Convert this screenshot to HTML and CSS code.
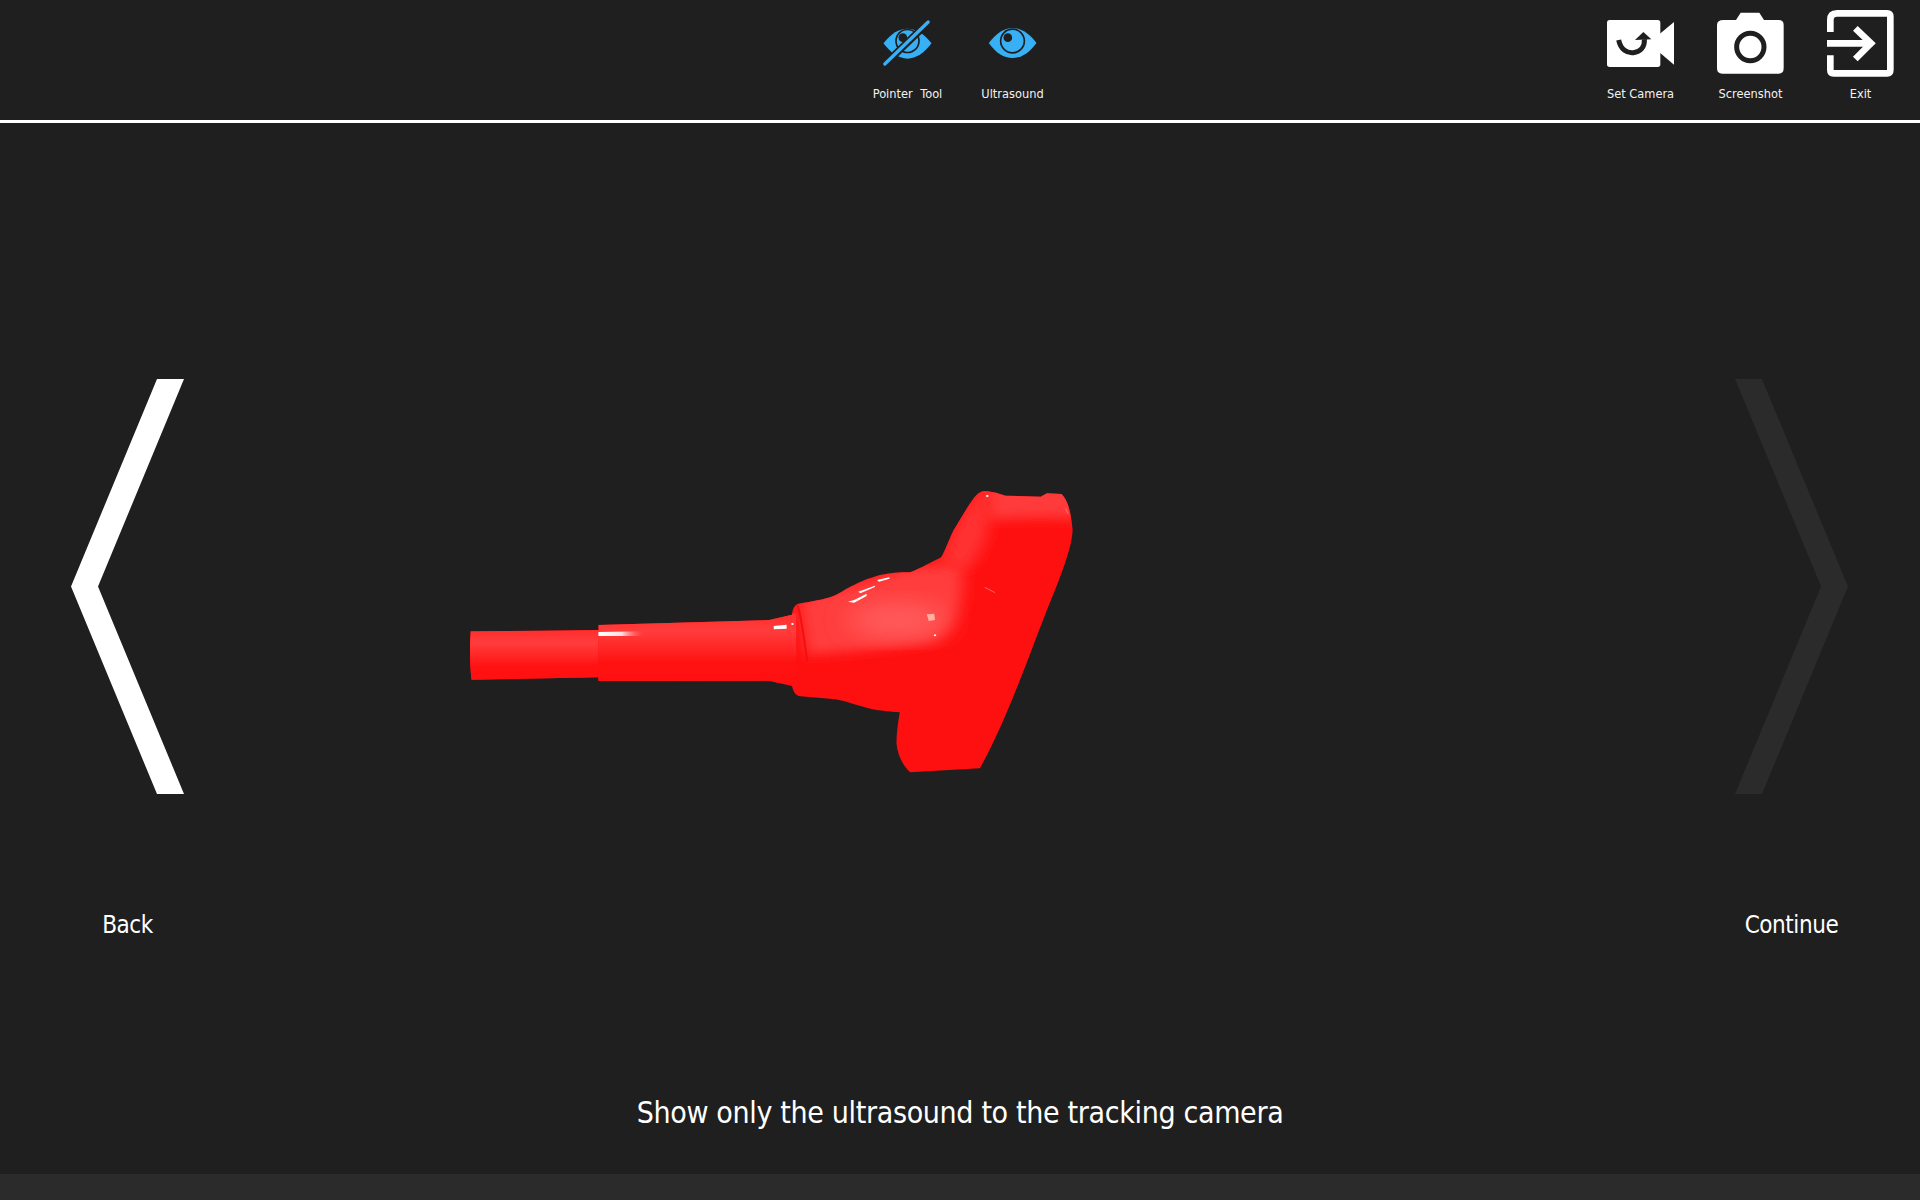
FILE: index.html
```html
<!DOCTYPE html>
<html lang="en">
<head>
<meta charset="utf-8">
<title>Ultrasound tracking</title>
<link rel="stylesheet" href="styles.css">
</head>
<body>
<div class="app">
  <header class="toolbar">
    <div class="tool-spacer"></div>
    <div class="tool-group tool-group-center">
      <div class="tool tool-wide">
        <svg class="tool-icon" viewBox="99.5 30 201 201">
          <path class="blue" d="M128 130C150 100 175 86 200 86s50 14 72 44c-22 30-47 46-72 46s-50-16-72-46z"/>
          <circle class="dark" cx="200" cy="123" r="37"/>
          <circle class="blue" cx="200" cy="123" r="32"/>
          <circle class="dark" cx="186" cy="113" r="13"/>
          <path class="slash-gap" d="M118 206L275 55"/>
          <path class="slash" d="M132 192L262 66"/>
        </svg>
        <span class="tool-label tool-label-spaced">Pointer Tool</span>
      </div>
      <div class="tool tool-wide">
        <svg class="tool-icon" viewBox="415.5 30 201 201">
          <path class="blue" d="M445 129C468 100 490 84 516 84s50 16 72 45c-22 30-46 45-72 45s-50-15-71-45z"/>
          <circle class="dark" cx="516" cy="123" r="38"/>
          <circle class="blue" cx="516" cy="123" r="33"/>
          <circle class="dark" cx="502" cy="113" r="13"/>
        </svg>
        <span class="tool-label">Ultrasound</span>
      </div>
    </div>
    <div class="tool-group tool-group-right">
      <div class="tool">
        <svg class="tool-icon" viewBox="81 30 201 201">
          <rect class="white" x="81" y="60" width="160" height="141" rx="8"/>
          <path class="white" d="M238 103L283 65V195L238 157z"/>
          <path class="arrow" d="M116 120C122 150 142 160 160 158C182 156 195 140 193 118"/>
          <path class="dark" d="M165 120L190 96L214 118z"/>
        </svg>
        <span class="tool-label">Set Camera</span>
      </div>
      <div class="tool">
        <svg class="tool-icon" viewBox="411 30 201 201">
          <path class="white" d="M431 60H468L482 38H538L552 60H596Q611 60 611 75V205Q611 221 596 221H427Q411 221 411 205V75Q411 60 431 60z"/>
          <circle class="ring" cx="511" cy="141" r="41"/>
        </svg>
        <span class="tool-label">Screenshot</span>
      </div>
      <div class="tool">
        <svg class="tool-icon" viewBox="741 30 201 201">
          <path class="exit-box" d="M751 96V60Q751 40 771 40H921Q931 40 931 50V210Q931 220 921 220H761Q751 220 751 210V166"/>
          <path class="exit-arrow" d="M741 130H872"/>
          <path class="exit-arrow" d="M826 85L873 130L826 177"/>
        </svg>
        <span class="tool-label">Exit</span>
      </div>
    </div>
  </header>

  <main class="stage">
    <div class="stage-row">
      <div class="nav nav-back">
        <svg class="chevron" viewBox="0 0 113 415"><polygon class="white" points="86,0 113,0 27,207.5 113,415 86,415 0,207.5"/></svg>
        <span class="nav-label">Back</span>
      </div>
      <div class="model-wrap">
        <svg class="model" viewBox="0 0 1568 960" preserveAspectRatio="none">
          <defs>
            <path id="outline" d="M1290 63C1310 64 1325 72 1340 77L1425 80L1440 70L1475 72C1488 88 1497 115 1502 180C1500 230 1480 300 1440 420C1405 530 1340 760 1278 895L1110 907C1095 890 1080 860 1077 820C1077 790 1081 755 1085 727C1060 725 1035 722 1020 718C985 708 960 695 930 688L845 679C835 678 828 665 825 648L770 632L358 633V622L52 629C48 590 47 530 50 484L358 480V465L770 450L825 434C826 418 830 408 838 402C870 395 905 388 925 378C945 368 955 355 975 345C1000 328 1020 322 1030 318C1050 310 1085 306 1110 307C1135 295 1165 275 1185 262C1195 240 1205 205 1215 180C1235 140 1255 95 1270 75C1277 67 1283 63 1290 63z"/>
            <clipPath id="body-clip"><use href="#outline"/></clipPath>
            <filter id="soft" x="-30%" y="-30%" width="160%" height="160%"><feGaussianBlur stdDeviation="18"/></filter>
            <filter id="softer" x="-30%" y="-30%" width="160%" height="160%"><feGaussianBlur stdDeviation="34"/></filter>
            <linearGradient id="tubeA" x1="0" y1="0" x2="0" y2="1">
              <stop offset="0" stop-color="#ff2e2e"/>
              <stop offset=".25" stop-color="#ff3c3c"/>
              <stop offset=".5" stop-color="#ff2626"/>
              <stop offset=".7" stop-color="#ff1212"/>
              <stop offset="1" stop-color="#ff1010"/>
            </linearGradient>
            <linearGradient id="shine" x1="0" y1="0" x2="1" y2="0">
              <stop offset="0" stop-color="#ffffff"/>
              <stop offset=".5" stop-color="#ffe0e0"/>
              <stop offset="1" stop-color="#ff5050" stop-opacity="0"/>
            </linearGradient>
          </defs>
          <use class="red" href="#outline"/>
          <g clip-path="url(#body-clip)">
            <path class="fill-tube" d="M40 484L358 480V630L40 635z"/>
            <path class="fill-tube" d="M358 450L835 430V640L358 640z"/>
            <path class="fill-neck soft" d="M840 390L1110 290L1230 280C1250 360 1225 470 1170 515C1090 530 950 545 860 555z"/>
            <ellipse class="fill-glow softer" cx="1080" cy="450" rx="120" ry="55"/>
            <path class="fill-head soft" d="M1290 50C1260 70 1220 150 1200 210L1180 280L1250 300C1285 240 1300 190 1300 150z"/>
            <path class="fill-rim soft" d="M1290 40L1520 50V150C1450 140 1360 145 1300 150z"/>
            <path class="ridge" d="M838 405C850 450 855 520 862 575"/>
          </g>
          <path class="shine" d="M358 486L470 484V498L358 498z"/>
          <path class="spark" d="M781 468L812 464V476L781 478z"/>
          <path class="spark" d="M960 395L975 390L1005 371V378L975 398z"/>
          <path class="spark" d="M985 365L1025 347V351L990 370z"/>
          <path class="spark" d="M1030 330L1060 322V326L1035 335z"/>
          <path class="spark-soft" d="M1150 433L1168 431L1170 450L1155 453z"/>
          <path class="spark-thin" d="M1290 352L1315 368"/>
          <path class="spark-thin" d="M1485 115L1491 132"/>
          <circle class="spark" cx="1170" cy="496" r="3"/>
          <circle class="spark" cx="1296" cy="78" r="3"/>
          <circle class="spark" cx="826" cy="462" r="3"/>
        </svg>
      </div>
      <div class="nav nav-continue">
        <svg class="chevron" viewBox="0 0 113 415"><polygon class="disabled" points="0,0 27,0 113,207.5 27,415 0,415 86,207.5"/></svg>
        <span class="nav-label">Continue</span>
      </div>
    </div>
    <p class="prompt">Show only the ultrasound to the tracking camera</p>
  </main>
  <footer class="statusbar"></footer>
</div>
</body>
</html>
```

FILE: styles.css
```css
* { box-sizing: border-box; }
html, body { margin: 0; height: 100%; }
body {
  background: #1f1f1f;
  color: #fff;
  font-family: "DejaVu Sans", sans-serif;
  font-stretch: condensed;
  overflow: hidden;
}
.app { display: flex; flex-direction: column; height: 1200px; }

.toolbar {
  display: grid;
  grid-template-columns: 1fr auto 1fr;
  height: 123px;
  padding-top: 10px;
  border-bottom: 3px solid #fff;
  flex: none;
}
.tool-group { display: flex; align-items: flex-start; }
.tool-group-center { gap: 33px; }
.tool-group-right { justify-content: flex-end; gap: 43px; padding-right: 26px; }
.tool { display: flex; flex-direction: column; align-items: center; width: 67px; }
.tool-wide { width: 72px; }
.tool-icon { width: 67px; height: 67px; display: block; }
.tool-label { font-size: 12.7px; line-height: 16px; margin-top: 9px; white-space: nowrap; color: #f2f2f2; }
.tool-label-spaced { word-spacing: 4px; }

.blue { fill: #38b0f6; }
.dark { fill: #1f1f1f; }
.white { fill: #fff; }
.disabled { fill: #2b2b2b; }
.slash { stroke: #38b0f6; stroke-width: 10; stroke-linecap: round; fill: none; }
.slash-gap { stroke: #1f1f1f; stroke-width: 22; fill: none; }
.arrow { fill: none; stroke: #1f1f1f; stroke-width: 15; }
.ring { fill: none; stroke: #1f1f1f; stroke-width: 15; }
.exit-box { fill: none; stroke: #fff; stroke-width: 20; }
.exit-arrow { fill: none; stroke: #fff; stroke-width: 20; }

.stage { flex: 1; display: flex; flex-direction: column; min-height: 0; }
.stage-row { display: flex; justify-content: space-between; padding: 256px 72px 0 71px; flex: 1; }
.nav { display: flex; flex-direction: column; align-items: center; width: 113px; }
.chevron { width: 113px; height: 415px; display: block; }
.nav-label { font-size: 24px; letter-spacing: -.45px; line-height: 32px; margin-top: 115px; white-space: nowrap; }
.model-wrap { flex: 1; padding: 91px 0 0 266px; }
.model { width: 650px; height: 320px; display: block; }
.prompt { margin: 0 0 43px; text-align: center; font-size: 30px; letter-spacing: -.34px; line-height: 36px; }
.statusbar { height: 26px; background: #2b2b2b; flex: none; }

.red { fill: #ff1010; }
.fill-tube { fill: url(#tubeA); }
.fill-neck { fill: #ff3c3c; }
.fill-glow { fill: #ff5a5a; }
.fill-rim { fill: #ff3a3a; }
.fill-head { fill: #ff3232; }
.soft { filter: url(#soft); }
.softer { filter: url(#softer); }
.ridge { fill: none; stroke: #f41010; stroke-width: 5; }
.shine { fill: url(#shine); }
.spark { fill: #fff; }
.spark-soft { fill: #ffb0a0; }
.spark-thin { stroke: #ff8080; stroke-width: 2; fill: none; }
```
